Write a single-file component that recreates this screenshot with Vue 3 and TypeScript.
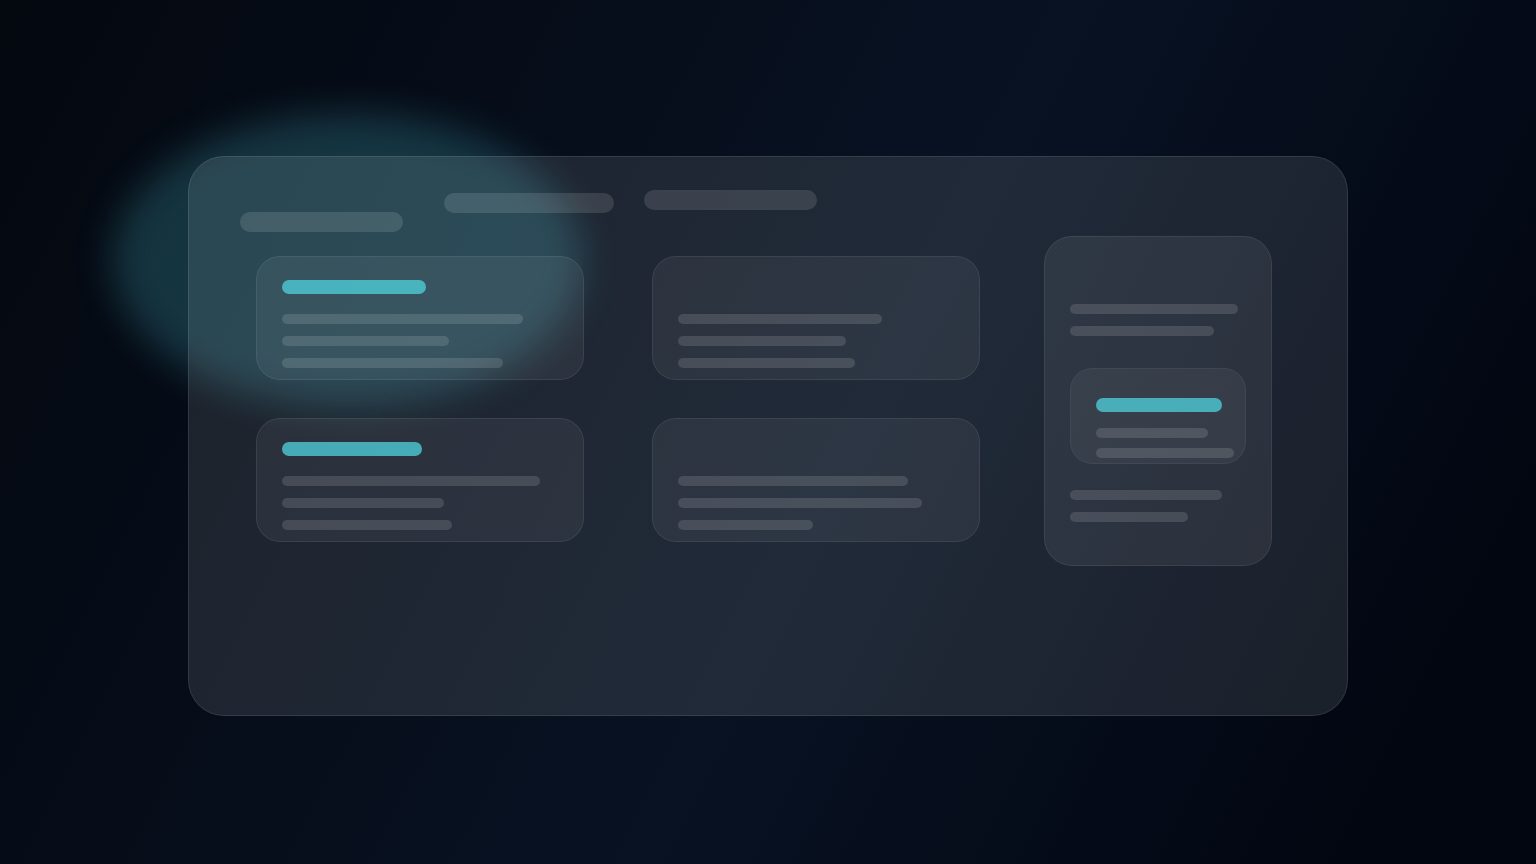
<script setup lang="ts">
interface Card {
  title: number | null
  lines: number[]
}

const tabs: { name: string; width: number }[] = [
  { name: 'low', width: 163 },
  { name: 'mid', width: 170 },
  { name: 'high', width: 173 },
]

const cards: Card[] = [
  { title: 144, lines: [241, 167, 221] },
  { title: null, lines: [204, 168, 177] },
  { title: 140, lines: [258, 162, 170] },
  { title: null, lines: [230, 244, 135] },
]

const asideTop = [168, 144]
const asideBottom = [152, 118]
const inset: Card = { title: 126, lines: [112, 138] }

const px = (n: number) => ({ width: `${n}px` })
</script>

<template>
  <div class="page">
    <div class="glow"></div>
    <main class="panel">
      <section class="content">
        <header class="tabs">
          <span v-for="t in tabs" :key="t.name" class="tab" :class="t.name" :style="px(t.width)"></span>
        </header>
        <div class="cards">
          <article v-for="(c, i) in cards" :key="i" class="card">
            <div v-if="c.title" class="title" :style="px(c.title)"></div>
            <div class="lines">
              <div v-for="(w, j) in c.lines" :key="j" class="line" :style="px(w)"></div>
            </div>
          </article>
        </div>
      </section>
      <aside class="aside">
        <div class="lines">
          <div v-for="(w, j) in asideTop" :key="j" class="line" :style="px(w)"></div>
        </div>
        <div class="inset">
          <div class="title" :style="px(inset.title ?? 0)"></div>
          <div class="lines tight">
            <div v-for="(w, j) in inset.lines" :key="j" class="line" :style="px(w)"></div>
          </div>
        </div>
        <div class="lines">
          <div v-for="(w, j) in asideBottom" :key="j" class="line" :style="px(w)"></div>
        </div>
      </aside>
    </main>
  </div>
</template>

<style>
body {
  margin: 0;
  background: #04070f;
}
</style>

<style scoped>
.page {
  position: relative;
  box-sizing: border-box;
  min-height: 100vh;
  padding: 8px 24px 0;
  display: flex;
  align-items: center;
  justify-content: center;
  overflow: hidden;
  background: linear-gradient(117deg, #04080f 0%, #081223 55%, #020611 90%, #020611 100%);
}
.glow {
  position: absolute;
  left: 112px;
  top: 114px;
  width: 470px;
  height: 292px;
  border-radius: 50%;
  background: rgba(77, 201, 220, 0.22);
  filter: blur(18px);
}
.panel {
  position: relative;
  box-sizing: border-box;
  width: 100%;
  max-width: 1160px;
  padding: 34px 76px 150px 52px;
  display: flex;
  gap: 64px;
  align-items: flex-start;
  border-radius: 36px;
  background: rgba(250, 252, 255, 0.1);
}
.panel::after,
.card::after,
.aside::after,
.inset::after {
  content: '';
  position: absolute;
  inset: 0;
  border: 1px solid rgba(255, 255, 255, 0.1);
  border-radius: inherit;
  pointer-events: none;
}
.content {
  flex: 1;
  min-width: 0;
}
.tabs {
  display: grid;
  grid-template-columns: 204px 200px 1fr;
  margin-bottom: 24px;
}
.tab {
  height: 20px;
  border-radius: 10px;
  background: rgba(255, 255, 255, 0.12);
}
.tab.low {
  margin-top: 22px;
}
.tab.mid {
  margin-top: 3px;
}
.cards {
  display: grid;
  grid-template-columns: 1fr 1fr;
  gap: 38px 68px;
  padding-left: 16px;
}
.card {
  position: relative;
  box-sizing: border-box;
  min-height: 124px;
  padding: 24px 26px 12px;
  display: flex;
  flex-direction: column;
  justify-content: flex-end;
  gap: 20px;
  border-radius: 24px;
  background: rgba(255, 255, 255, 0.06);
}
.card::after,
.aside::after {
  border-color: rgba(255, 255, 255, 0.08);
}
.title {
  height: 14px;
  border-radius: 7px;
  background: rgba(77, 203, 214, 0.8);
}
.lines {
  display: flex;
  flex-direction: column;
  gap: 12px;
}
.lines.tight {
  gap: 10px;
}
.line {
  height: 10px;
  border-radius: 5px;
  background: rgba(255, 255, 255, 0.13);
}
.aside {
  position: relative;
  box-sizing: border-box;
  flex: 0 0 228px;
  margin-top: 46px;
  padding: 68px 26px 44px;
  border-radius: 28px;
  background: rgba(255, 255, 255, 0.07);
}
.inset {
  position: relative;
  margin: 32px 0 26px;
  padding: 30px 12px 6px 26px;
  display: flex;
  flex-direction: column;
  gap: 16px;
  border-radius: 22px;
  background: rgba(255, 255, 255, 0.05);
}
.inset::after {
  border-color: rgba(255, 255, 255, 0.05);
}
</style>
